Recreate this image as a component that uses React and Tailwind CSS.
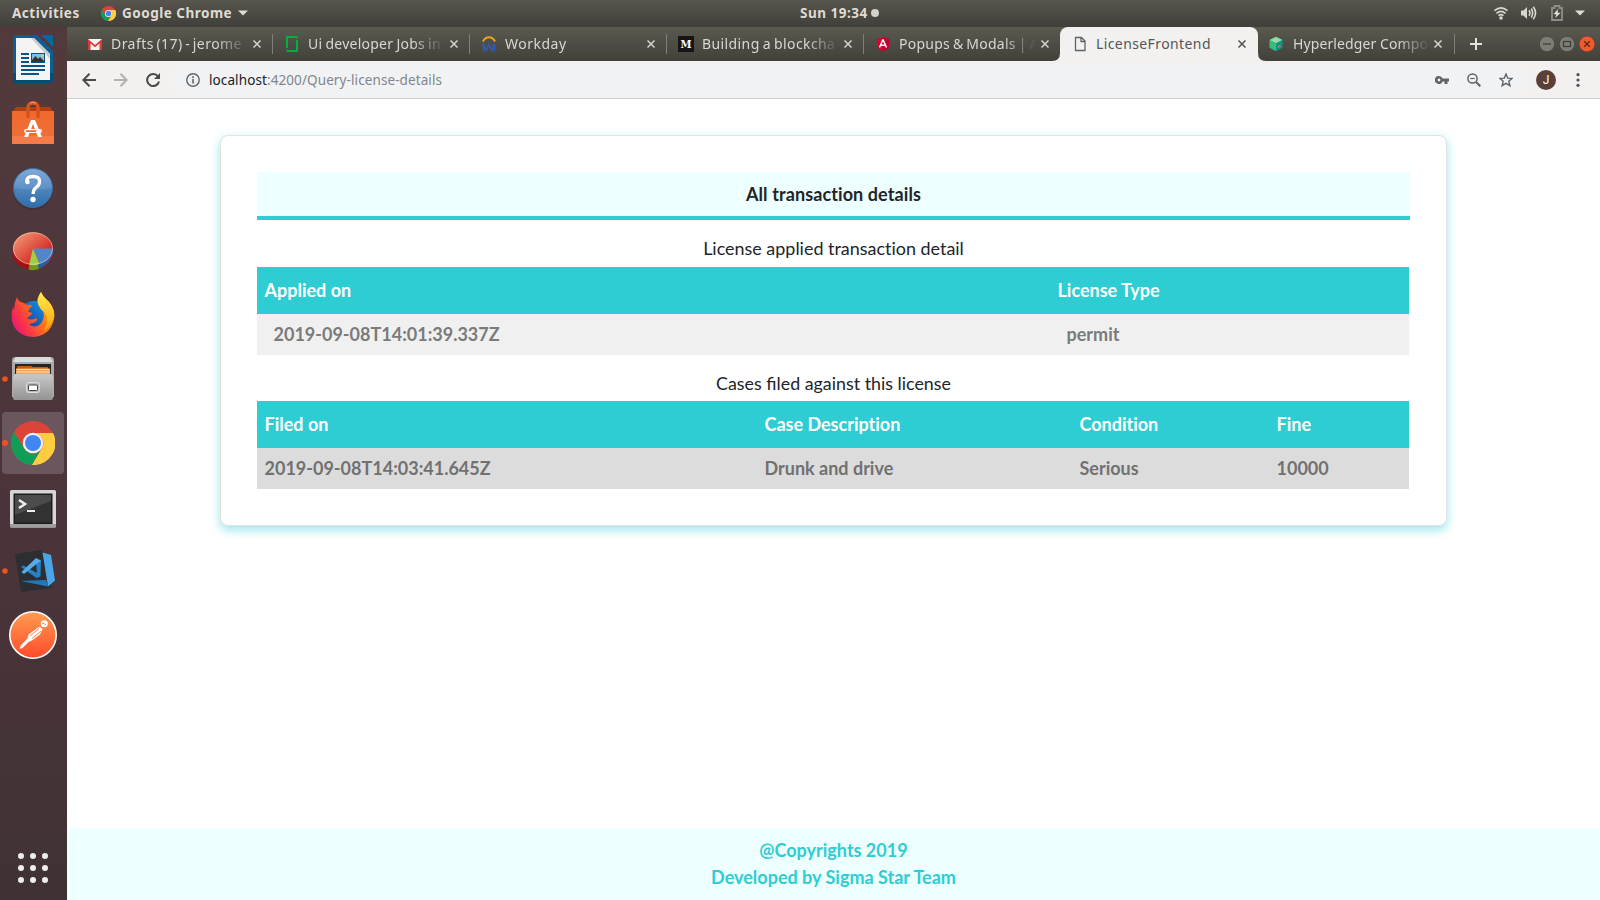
import React from "react";

const UI = "font-['Noto_Sans','Open_Sans',sans-serif]";

function ChromeLogo({ className }) {
  return (
    <svg viewBox="-22 -22 44 44" className={className}>
      <circle r="22" fill="#db4437" />
      <path d="M-19 -11 A22 22 0 0 0 -1 22 L9 5 A10 10 0 0 1 -9 5Z" fill="#0f9d58" />
      <path d="M0 -10 L20 -10 A22 22 0 0 1 -1 22 L9 5 A10 10 0 0 0 0 -10Z" fill="#ffcd40" />
      <circle r="10.3" fill="#f1f1f1" />
      <circle r="8" fill="#4285f4" />
    </svg>
  );
}

function TopBar() {
  return (
    <header className={`flex h-[27px] shrink-0 items-center bg-gradient-to-b from-[#58554d] to-[#403f3a] pb-px text-[13.5px] font-bold leading-[26px] tracking-[0.5px] text-[#dfdbd2] ${UI}`}>
      <div className="flex w-[800px] shrink-0 items-center">
        <span className="ml-3 w-[89px] whitespace-nowrap">Activities</span>
        <ChromeLogo className="size-[15px]" />
        <span className="ml-[6px] w-[110px] whitespace-nowrap">Google Chrome</span>
        <svg viewBox="0 0 10 6" className="ml-[6px] h-[6px] w-[10px]"><path d="M0 .5H10L5 5.5Z" fill="#dfdbd2" /></svg>
      </div>
      <div className="flex items-center gap-[3px]">
        <span className="whitespace-nowrap">Sun 19:34</span>
        <span className="size-2 rounded-full bg-[#d3d1cb]" />
      </div>
      <div className="flex flex-1 items-center justify-end pr-[15px]">
        <svg viewBox="0 0 14 14" className="mr-[13px] size-[14px]" fill="none" stroke="#d8d6cf" strokeWidth="1.6">
          <path d="M.5 4.7Q7-1 13.500 4.7" /><path d="M2.500 7.300Q7 3.300 11.500 7.300" /><path d="M4.500 9.600Q7 7.600 9.500 9.600" />
          <circle cx="7" cy="12" r="1.8" fill="#d8d6cf" stroke="none" />
        </svg>
        <svg viewBox="0 0 16 14" className="mr-[14px] h-[14px] w-4" fill="none" stroke="#d8d6cf" strokeWidth="1.6">
          <path d="M0 4.500H2.500L6 1V13L2.500 9.500H0Z" fill="#d8d6cf" stroke="none" />
          <path d="M8 4.300Q9.800 7 8 9.700M10.300 2.500Q13 7 10.300 11.500M12.300 .8Q16.800 7 12.300 13.200" />
        </svg>
        <svg viewBox="0 0 12 16" className="mr-[12px] h-4 w-3" fill="none">
          <path d="M1 3H3.500V1H8.500V3H11V15H1Z" stroke="#8f8d86" strokeWidth="1.8" />
          <path d="M7 4L2.500 9.300H5.300L4.300 13L9.500 7.800H6.600Z" fill="#e5e3dc" />
        </svg>
        <svg viewBox="0 0 10 6" className="h-[6px] w-[10px]"><path d="M0 .5H10L5 5.500Z" fill="#dfdbd2" /></svg>
      </div>
    </header>
  );
}

const dockIcons = {
  writer: (
    <>
      <path d="M16 8H37L53 24V53Q53 56 50 56H16Q13 56 13 53V11Q13 8 16 8Z" fill="#0c5f94" />
      <path d="M13 46H53V53Q53 56 50 56H16Q13 56 13 53Z" fill="#034d7b" />
      <path d="M16 11H34L50 27V53H16Z" fill="#f4f4f4" />
      <path d="M34 11L50 27V32L31 11Z" fill="#c9cdd0" />
      <path d="M41 8H51Q53 8 53 10V20Z" fill="#0369a3" />
      <path d="M21 27H29M21 31H29M21 35H29M21 39H45M21 43H45M21 47H39" stroke="#0a5384" strokeWidth="2" />
      <rect x="31" y="26" width="14" height="10" fill="#0a5384" />
      <rect x="32" y="27" width="12" height="8" fill="#7bc0e8" />
      <path d="M32 35V33L35.500 29L38 32L40 30L44 34V35Z" fill="#333" />
      <circle cx="42.500" cy="28.500" r="1.300" fill="#efc84a" />
    </>
  ),
  software: (
    <g transform="translate(0 -3)">
      <path d="M14 22L16 19H50L52 22V27H14Z" fill="#b93c11" />
      <path d="M12 23H54V56H12Z" fill="url(#bag)" />
      <path d="M12 48H54V56H12Z" fill="#f57b48" />
      <path d="M28 30V20Q28 15 33 15T38 20V30" fill="none" stroke="#d9511f" strokeWidth="3.500" />
      <path d="M30 15Q33 13.500 36 15" fill="none" stroke="#f58a58" strokeWidth="1.500" />
      <path d="M31 32H35L42 49H38L33 36L28 49H24Z" fill="#fff" />
      <rect x="24" y="41" width="18" height="4" rx="2" fill="#fff" />
      <rect x="25.500" y="42.200" width="11" height="1.800" rx=".9" fill="#ed6a32" />
    </g>
  ),
  help: (
    <>
      <ellipse cx="33" cy="35" rx="20" ry="20" fill="#35282b" opacity=".45" />
      <circle cx="33" cy="33" r="19.500" fill="url(#help)" stroke="#3b6ea5" />
      <path d="M14 33A19 19 0 0 1 52 33Q33 36 14 33Z" fill="#fff" opacity=".1" />
      <path d="M26.500 27.500Q26 21.500 33 21.500T39.500 27Q39.500 30 36 32.500Q33.200 34.700 33.200 39" fill="none" stroke="#fff" strokeWidth="3.300" />
      <circle cx="27.500" cy="27" r="2.200" fill="#fff" />
      <circle cx="33" cy="44.500" r="2.700" fill="#fff" />
    </>
  ),
  usage: (
    <g transform="translate(0 -2)">
      <ellipse cx="33" cy="36" rx="20.500" ry="16.500" fill="#a41010" />
      <path d="M33 32H53V37Q50 48 39 52L33 40Z" fill="#2c5d9b" />
      <path d="M33 33L28.500 52.500Q34 54 39 52Z" fill="#72991f" />
      <ellipse cx="33" cy="31.500" rx="20" ry="16.300" fill="url(#pie)" />
      <path d="M33 31.500H53Q52 43 39.500 47Z" fill="#5287c7" />
      <path d="M33 31.500L29 47.800Q35 49 39.500 47Z" fill="#a3cd45" />
      <ellipse cx="33" cy="31.500" rx="19.500" ry="15.800" fill="none" stroke="#fff" opacity=".4" />
    </g>
  ),
  firefox: (
    <>
      <circle cx="34" cy="34" r="16" fill="url(#globe)" />
      <path d="M17 14Q18 18 21 19Q25 20 27 22Q31 21 32 23Q29 25 28 29Q32 29 32 31L27 35Q31 38 37 35L36.500 38Q33 41 29 41Q36 47 42 39Q45 33 43 28Q38 24 38 18Q38 13 41 9Q45 16 49 19Q56 27 54 36Q50 53 33 54Q16 53 12 38Q11 30 13 24L14 27Q14 20 17 14Z" fill="url(#fox)" />
      <path d="M41 9Q36 16 38 21Q40 26 44 29Q50 35 44 48Q55 40 54 29Q52 21 46 16Q42 13 41 9Z" fill="url(#flame)" />
    </>
  ),
  files: (
    <>
      <path d="M15 10H51Q54 10 54 14V50H12V14Q12 10 15 10Z" fill="#aaa" />
      <path d="M16 10H50L53 15H13Z" fill="#dcdcdc" />
      <path d="M15 17H51V30H15Z" fill="#252525" />
      <path d="M17 20Q17 19 19 19H31L33 20H48V25H16Z" fill="#c35d16" />
      <path d="M16 21.500H50V28H16Z" fill="#f3a357" />
      <path d="M17 22.500H49M17 25H50" stroke="#ffe0b4" strokeWidth="1" />
      <path d="M15 27H51L53 29V51Q53 53 51 53H15Q13 53 13 51V29Z" fill="url(#drawer)" />
      <rect x="26.500" y="35.500" width="13" height="10" rx="2" fill="#b8b8b8" stroke="#ddd" />
      <rect x="28.500" y="38" width="9" height="5.500" rx="1" fill="#fff" stroke="#444" />
    </>
  ),
  terminal: (
    <>
      <rect x="10" y="15" width="46" height="37.500" rx="1.500" fill="#d6d6d6" />
      <path d="M10 49H56V51Q56 52.500 54 52.500H12Q10 52.500 10 51Z" fill="#9e9e9e" />
      <rect x="13.500" y="18.500" width="39" height="30.500" fill="#1c1c1c" />
      <rect x="15" y="20" width="36" height="27.500" fill="#323232" />
      <path d="M15 20H51V26L15 40Z" fill="#4b4b4b" />
      <path d="M19 25L25 29L19 33" fill="none" stroke="#eee" strokeWidth="2.500" />
      <path d="M27 36H35" stroke="#eee" strokeWidth="2" />
    </>
  ),
  code: (
    <>
      <path d="M15 15L42 11L52 49L21 53Z" fill="#2d2e31" />
      <path d="M21 42L46 41L48 47.500Z" fill="#2079bd" />
      <path d="M42.500 13.500L51 16L55 41.500L48 47.500Z" fill="#4aa5e8" />
      <path d="M21 28L23.500 26.500L37 34L36 24L41 21L40.500 37.500L36.500 39Z" fill="#2482c9" />
      <path d="M36 19L41 21.500L24 35L21.500 33Z" fill="#56aae8" />
    </>
  ),
  postman: (
    <>
      <circle cx="33" cy="32" r="23.200" fill="url(#post)" stroke="#fff" strokeWidth="1.600" />
      <circle cx="44.300" cy="20.700" r="3.500" fill="#fff" />
      <path d="M39.500 23.500L42.500 26L40 31.500L32 37.500L28.500 39L22 45.500L19.500 45.500L21 42L27.500 35.500L28.500 31.500Z" fill="#fff" />
      <path d="M39 25.500L30 33M41 28L32 35.500" fill="none" stroke="#ff7a3d" strokeWidth=".9" />
      <path d="M42 20L46 21.500" stroke="#ff8a4a" strokeWidth="1" />
    </>
  ),
};

const dock = [
  ["writer", false], ["software", false], ["help", false], ["usage", false], ["firefox", false],
  ["files", true], ["chrome", true], ["terminal", false], ["code", true], ["postman", false],
];

function Gradient({ id, from, to }) {
  return (
    <linearGradient id={id} x1="0" y1="0" x2="0" y2="1">
      <stop offset="0" stopColor={from} /><stop offset="1" stopColor={to} />
    </linearGradient>
  );
}

function Dock() {
  return (
    <aside className="flex w-[67px] shrink-0 flex-col bg-gradient-to-b from-[#523a3c] via-[#4a343a] via-60% to-[#403234]">
      <svg className="absolute size-0">
        <defs>
          <Gradient id="bag" from="#f0692c" to="#ef7039" />
          <Gradient id="help" from="#719fd3" to="#2f6dab" />
          <linearGradient id="pie" x1="0" y1="0" x2="1" y2="1"><stop offset="0" stopColor="#f6a27c" /><stop offset=".7" stopColor="#d62f28" /></linearGradient>
          <linearGradient id="globe" x1="1" y1="0" x2="0" y2="1"><stop offset="0" stopColor="#0aa5f7" /><stop offset="1" stopColor="#2d1b78" /></linearGradient>
          <linearGradient id="fox" x1="1" y1="0.2" x2="0" y2=".8"><stop offset="0" stopColor="#ffc400" /><stop offset=".4" stopColor="#ff7a16" /><stop offset=".75" stopColor="#fb3348" /><stop offset="1" stopColor="#e4167c" /></linearGradient>
          <Gradient id="flame" from="#fff04a" to="#ff9a10" />
          <Gradient id="drawer" from="#c8c8c8" to="#949494" />
          <Gradient id="post" from="#ff9c50" to="#ff4b2b" />
        </defs>
      </svg>
      {dock.map(([name, running]) => (
        <div key={name} className="flex h-16 items-center">
          {name === "chrome" ? (
            <div className="relative ml-[2px] flex size-[62px] items-center justify-center rounded-[4px] bg-[#6a575d]">
              <ChromeLogo className="size-[44px]" />
              <span className="absolute left-0 top-[28px] size-[6px] rounded-full bg-[#e95420]" />
            </div>
          ) : (
            <svg viewBox="0 0 67 64" className="h-16 w-[67px]">
              {dockIcons[name]}
              {running && <circle cx="5" cy="32" r="2.800" fill="#e95420" />}
            </svg>
          )}
        </div>
      ))}
      <div className="mb-[17px] ml-[18px] mt-auto grid w-[30px] grid-cols-3 gap-[6px]">
        {Array.from({ length: 9 }, (_, i) => <span key={i} className="size-[6px] rounded-full bg-[#eeeeec]" />)}
      </div>
    </aside>
  );
}

const favicons = {
  gmail: (
    <><path d="M1 3H15V14H1Z" fill="#f4f4f4" /><path d="M1 14V3L8 9L15 3V14H12.500V7.500L8 11.300L3.500 7.500V14Z" fill="#d93a35" /></>
  ),
  jobs: (
    <path d="M3 1V12M13 15V4M2 1H12.500V2.500M14 15H3.500V13.500" fill="none" stroke="#00b140" strokeWidth="2" />
  ),
  workday: (
    <>
      <path d="M2 5.500Q4 1.300 8 1.300T14 5.500" fill="none" stroke="#e9a420" strokeWidth="2" />
      <path d="M2.500 7L5 14.500L8 8.500L11 14.500L13.500 7M2.500 8V15.500M13.500 8V15.500" fill="none" stroke="#3559a8" strokeWidth="1.800" />
    </>
  ),
  medium: (
    <><rect width="16" height="16" fill="#151515" /><text x="8" y="12" textAnchor="middle" fontFamily="DejaVu Serif" fontWeight="700" fontSize="11" textLength="11" lengthAdjust="spacingAndGlyphs" fill="#fff">M</text></>
  ),
  angular: (
    <>
      <path d="M8 1L14.500 3.300L13.500 12L8 15.300L2.500 12L1.500 3.300Z" fill="#dd0031" /><path d="M8 1L14.500 3.300L13.500 12L8 15.300Z" fill="#c3002f" />
      <path d="M8 3.500L4.500 11.500M8 3.500L11.500 11.500M5.800 9.300H10.200" fill="none" stroke="#fff" strokeWidth="1.500" />
    </>
  ),
  page: (
    <path d="M3.500 1.500H9.500L13 5V14.500H3.500ZM9 1.500V5.500H13" fill="none" stroke="#5f6368" strokeWidth="1.300" />
  ),
  hyperledger: (
    <>
      <path d="M8 .8L14.500 4L8 7.500L1.500 4Z" fill="#8be0a4" /><path d="M1.500 4L8 7.500V15.300L1.500 11.800Z" fill="#38bd7c" /><path d="M14.500 4L8 7.500V15.300L14.500 11.800Z" fill="#0b9687" />
      <path d="M10 10L12.500 8.700V10.500L10 12Z" fill="#e86b5c" />
    </>
  ),
};

const tabs = [
  ["gmail", "Drafts (17) - jerome", "tracking-[0.45px] [word-spacing:-1.5px]"],
  ["jobs", "Ui developer Jobs in", "tracking-[0.25px] [word-spacing:-0.8px]"],
  ["workday", "Workday", "tracking-[0.5px]"],
  ["medium", "Building a blockcha", "tracking-[0.4px] [word-spacing:-1px]"],
  ["angular", "Popups & Modals | A", "tracking-[0.25px] [word-spacing:-1px]"],
  ["page", "LicenseFrontend", "tracking-[0.4px]"],
  ["hyperledger", "Hyperledger Compo", "tracking-[0.1px]"],
];

function Tab({ icon, title, spacing, active, last, divider }) {
  const box = active ? "-ml-px w-[198px] pl-3 rounded-t-[8px] bg-[#f2f1ef] text-[#55565a]" : last ? "-ml-px w-[198px] pl-[11px] text-[#d9d7ce]" : "w-[197px] pl-[11px] text-[#d9d7ce]";
  return (
    <div className={`relative flex shrink-0 items-center ${box}`}>
      <svg viewBox="0 0 16 16" className="size-4 shrink-0">{favicons[icon]}</svg>
      <span className={`overflow-hidden whitespace-nowrap pb-[2px] ${last ? "ml-[9px] w-[138px]" : "ml-2 w-[139px]"} ${spacing} ${active ? "" : "[mask-image:linear-gradient(to_right,black_104px,transparent_137px)]"}`}>{title}</span>
      <svg viewBox="0 0 8 8" className="ml-[3px] size-2 shrink-0"><path d="M.5 .5L7.500 7.500M7.500 .5L.5 7.500" stroke={active ? "#505050" : "#d5d3ca"} strokeWidth="1.500" /></svg>
      {divider && <span className="absolute right-0 top-[7px] h-5 w-px bg-[#7f7e77]" />}
      {active && (
        <>
          <svg viewBox="0 0 8 8" className="absolute -left-2 bottom-0 size-2"><path d="M8 0V8H0Q8 8 8 0Z" fill="#f2f1ef" /></svg>
          <svg viewBox="0 0 8 8" className="absolute -right-2 bottom-0 size-2"><path d="M0 0V8H8Q0 8 0 0Z" fill="#f2f1ef" /></svg>
        </>
      )}
    </div>
  );
}

function TabStrip() {
  return (
    <div className={`flex h-[34px] shrink-0 bg-gradient-to-b from-[#5b5a50] to-[#41403a] pl-[9px] text-[14px] ${UI}`}>
      {tabs.map(([icon, title, spacing], i) => (
        <Tab key={icon} icon={icon} title={title} spacing={spacing} active={i === 5} last={i === 6} divider={i !== 4 && i !== 5} />
      ))}
      <div className="flex flex-1 items-center pl-[15px]">
        <svg viewBox="0 0 12 12" className="size-3"><path d="M6 0V12M0 6H12" stroke="#e4e2da" strokeWidth="2" /></svg>
        <div className="ml-auto flex gap-1 pr-[5px]">
          <svg viewBox="0 0 16 16" className="size-4"><circle cx="8" cy="8" r="7.700" fill="#7d7c75" stroke="#3a3934" strokeWidth=".6" /><path d="M4 8H12" stroke="#3c3b37" strokeWidth="1.200" /></svg>
          <svg viewBox="0 0 16 16" className="size-4"><circle cx="8" cy="8" r="7.700" fill="#7d7c75" stroke="#3a3934" strokeWidth=".6" /><rect x="4.500" y="5.500" width="7" height="5" fill="none" stroke="#3c3b37" strokeWidth="1.200" /></svg>
          <svg viewBox="0 0 16 16" className="size-4"><circle cx="8" cy="8" r="7.800" fill="#f05a2e" stroke="#5a3526" strokeWidth=".4" /><path d="M5.200 5.200L10.800 10.800M10.800 5.200L5.200 10.800" stroke="#5a2716" strokeWidth="1.300" /></svg>
        </div>
      </div>
    </div>
  );
}

function Toolbar() {
  return (
    <div className={`flex h-[38px] shrink-0 items-center border-b border-[#cfcfcf] bg-[#f2f1ef] pl-[15px] ${UI}`}>
      <svg viewBox="0 0 14 14" className="size-[14px]" fill="none" stroke="#4a4a4a" strokeWidth="2"><path d="M14 7H1.500M7.500 .7L1.300 7L7.500 13.300" /></svg>
      <svg viewBox="0 0 14 14" className="ml-[18px] size-[14px]" fill="none" stroke="#b0b0b0" strokeWidth="2"><path d="M0 7H12.500M6.500 .7L12.700 7L6.500 13.300" /></svg>
      <svg viewBox="0 0 14 14" className="ml-[18px] size-[14px]" fill="none" stroke="#4a4a4a" strokeWidth="2"><path d="M12 3.500A6 6 0 1 0 13 8.500" /><path d="M14 0V6H8Z" fill="#4a4a4a" stroke="none" /></svg>
      <div className="ml-[15px] flex h-[30px] w-[1349px] items-center rounded-full bg-[#f1f2f4] pl-[11px] pr-[11px] pt-px">
        <svg viewBox="0 0 14 14" className="size-[14px]" fill="none" stroke="#5f6368" strokeWidth="1.400"><circle cx="7" cy="7" r="6.200" /><path d="M7 6V10.500M7 3.300V5" strokeWidth="1.600" /></svg>
        <span className="ml-[9px] whitespace-nowrap text-[13.500px] leading-5 tracking-[0.1px] text-[#80868b]"><span className="text-[#202124]">localhost</span>:4200/Query-license-details</span>
        <svg viewBox="0 0 14 8" className="ml-auto h-2 w-[14px]"><path d="M4 0A4 4 0 1 0 7.600 5.500H9.500V8H12.500V5.500H14V2.500H7.600A4 4 0 0 0 4 0Z" fill="#5f6368" /><circle cx="4" cy="4" r="1.400" fill="#f1f2f4" /></svg>
        <svg viewBox="0 0 14 14" className="ml-[18px] size-[14px]" fill="none" stroke="#5f6368" strokeWidth="1.500"><circle cx="5.500" cy="5.500" r="4.600" /><path d="M9 9L13.300 13.300" strokeWidth="2" /><path d="M3.300 5.500H7.700" strokeWidth="1.200" /></svg>
        <svg viewBox="0 0 14 14" className="ml-[18px] size-[14px]" fill="none" stroke="#5f6368" strokeWidth="1.400"><path d="M7 1L8.700 5.100L13.100 5.400L9.800 8.300L10.900 12.700L7 10.400L3.100 12.700L4.200 8.300L.9 5.400L5.300 5.100Z" /></svg>
      </div>
      <div className="ml-[12px] flex size-5 items-center justify-center rounded-full bg-[#5b4037] font-['Roboto',sans-serif] text-[12px] leading-none text-white">J</div>
      <svg viewBox="0 0 4 14" className="ml-5 h-[14px] w-1" fill="#4f5256"><circle cx="2" cy="1.700" r="1.600" /><circle cx="2" cy="7" r="1.600" /><circle cx="2" cy="12.300" r="1.600" /></svg>
    </div>
  );
}

function Page() {
  return (
    <main className="flex flex-1 flex-col bg-white font-['Lato',sans-serif] text-[18px] leading-[27px] text-[#212529]">
      <section className="ml-[153px] mt-9 h-[391px] w-[1227px] rounded-[8px] border border-[#dfe3e4] bg-white px-9 pt-9 shadow-[0_5px_8px_0_rgba(46,205,211,0.32),0_2px_12px_0_rgba(46,205,211,0.18)]">
        <h1 className="h-12 border-b-4 border-[#2ecdd3] bg-[#eeffff] pt-[9px] text-center font-bold tracking-[0.1px] [font-variant-ligatures:none]">All transaction details</h1>
        <h2 className="h-[47px] pt-[15px] text-center text-[17.950px] [font-variant-ligatures:none]">License applied transaction detail</h2>
        <table className="w-[1152px] table-fixed border-collapse text-left">
          <colgroup><col className="w-[793px]" /><col /></colgroup>
          <thead>
            <tr className="h-[47px] bg-[#2ecdd3] text-white"><th className="px-[7.500px] py-0 font-bold">Applied on</th><th className="px-[7.500px] py-0 font-bold">License Type</th></tr>
          </thead>
          <tbody>
            <tr className="h-[41px] bg-[#f0f0f0] font-bold text-[#7b7b7b]"><td className="px-[16.500px] py-0">2019-09-08T14:01:39.337Z</td><td className="px-[16.500px] py-0">permit</td></tr>
          </tbody>
        </table>
        <h2 className="h-[46px] pt-[15px] text-center text-[17.850px]">Cases filed against this license</h2>
        <table className="w-[1152px] table-fixed border-collapse text-left [font-variant-ligatures:none]">
          <colgroup><col className="w-[500px]" /><col className="w-[315px]" /><col className="w-[197px]" /><col /></colgroup>
          <thead>
            <tr className="h-[47px] bg-[#2ecdd3] text-white">
              {["Filed on", "Case Description", "Condition", "Fine"].map((h) => <th key={h} className="px-[7.500px] py-0 font-bold">{h}</th>)}
            </tr>
          </thead>
          <tbody>
            <tr className="h-[41px] bg-[#dcdcdc] font-bold text-[#717171]">
              {["2019-09-08T14:03:41.645Z", "Drunk and drive", "Serious", "10000"].map((c) => <td key={c} className="px-[7.500px] py-0">{c}</td>)}
            </tr>
          </tbody>
        </table>
      </section>
      <footer className="mt-auto h-[72px] bg-[#eeffff] pt-[9px] text-center font-bold text-[#2ecdd3]">
        <p>@Copyrights 2019</p>
        <p>Developed by Sigma Star Team</p>
      </footer>
    </main>
  );
}

export default function App() {
  return (
    <div className="flex h-[900px] w-[1600px] flex-col overflow-hidden">
      <TopBar />
      <div className="flex min-h-0 flex-1">
        <Dock />
        <div className="flex min-w-0 flex-1 flex-col">
          <TabStrip />
          <Toolbar />
          <Page />
        </div>
      </div>
    </div>
  );
}
